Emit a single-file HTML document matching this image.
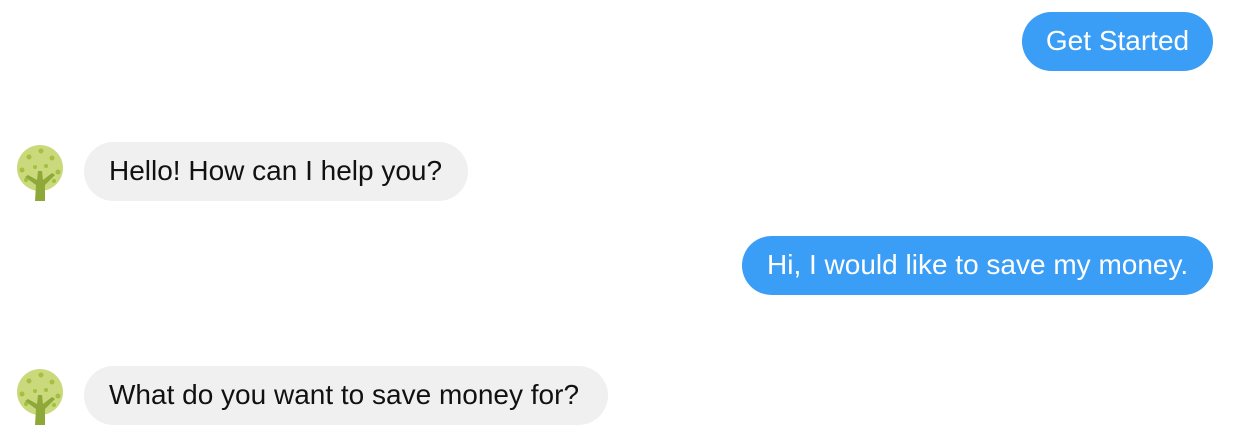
<!DOCTYPE html>
<html><head><meta charset="utf-8"><style>
body{margin:0;width:1260px;height:436px;background:#fff;position:relative;overflow:hidden;font-family:"Liberation Sans",Helvetica,Arial,sans-serif}
.b{position:absolute;height:59px;border-radius:30px;font-size:28px;line-height:58px;box-sizing:border-box;padding:0 25px;white-space:nowrap}
.u{background:#3a9df6;color:#fff}
.g{background:#f0f0f0;color:#111}
.av{position:absolute;width:50px;height:56px}
</style></head><body>
<div class="b u" style="left:1022px;top:12px;width:191px;text-align:center;padding:0">Get Started</div>
<svg class="av" style="left:15px;top:145px" viewBox="0 0 50 56">
<circle cx="25" cy="23" r="23" fill="#c9d97c"/>
<g fill="#a6bf3e"><circle cx="14" cy="12" r="2.5"/><circle cx="26" cy="6" r="2.5"/><circle cx="37" cy="13" r="2.5"/><circle cx="7" cy="25" r="2.5"/><circle cx="43" cy="27" r="2.5"/><circle cx="20" cy="22" r="2"/><circle cx="31" cy="21" r="2"/><circle cx="11" cy="35" r="2"/><circle cx="39" cy="36" r="2"/></g>
<path d="M20 56 L21 40 L10 32 L13 30 L22 35 L23 26 L27 26 L28 35 L37 28 L40 30 L30 40 L30 56 Z" fill="#8fa83a"/>
</svg>
<div class="b g" style="left:84px;top:142px;width:384px">Hello! How can I help you?</div>
<div class="b u" style="left:742px;top:236px;width:471px">Hi, I would like to save my money.</div>
<svg class="av" style="left:15px;top:369px" viewBox="0 0 50 56">
<circle cx="25" cy="23" r="23" fill="#c9d97c"/>
<g fill="#a6bf3e"><circle cx="14" cy="12" r="2.5"/><circle cx="26" cy="6" r="2.5"/><circle cx="37" cy="13" r="2.5"/><circle cx="7" cy="25" r="2.5"/><circle cx="43" cy="27" r="2.5"/><circle cx="20" cy="22" r="2"/><circle cx="31" cy="21" r="2"/><circle cx="11" cy="35" r="2"/><circle cx="39" cy="36" r="2"/></g>
<path d="M20 56 L21 40 L10 32 L13 30 L22 35 L23 26 L27 26 L28 35 L37 28 L40 30 L30 40 L30 56 Z" fill="#8fa83a"/>
</svg>
<div class="b g" style="left:84px;top:366px;width:524px">What do you want to save money for?</div>
</body></html>
